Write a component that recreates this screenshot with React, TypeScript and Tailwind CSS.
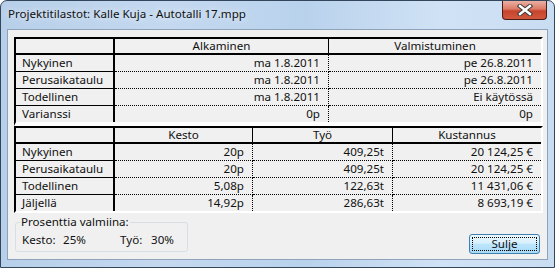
const font = { fontFamily: '"Noto Sans", "Open Sans", sans-serif' }

type Table = {
  cols: string
  head: string[]
  rows: string[][]
}

const ajat: Table = {
  cols: 'grid-cols-[99px_214px_212px]',
  head: ['', 'Alkaminen', 'Valmistuminen'],
  rows: [
    ['Nykyinen', 'ma 1.8.2011', 'pe 26.8.2011'],
    ['Perusaikataulu', 'ma 1.8.2011', 'pe 26.8.2011'],
    ['Todellinen', 'ma 1.8.2011', 'Ei käytössä'],
    ['Varianssi', '0p', '0p'],
  ],
}

const maarat: Table = {
  cols: 'grid-cols-[99px_138px_140px_148px]',
  head: ['', 'Kesto', 'Työ', 'Kustannus'],
  rows: [
    ['Nykyinen', '20p', '409,25t', '20 124,25 €'],
    ['Perusaikataulu', '20p', '409,25t', '20 124,25 €'],
    ['Todellinen', '5,08p', '122,63t', '11 431,06 €'],
    ['Jäljellä', '14,92p', '286,63t', '8 693,19 €'],
  ],
}

function StatsTable({ t, bottom }: { t: Table; bottom: string }) {
  return (
    <div className={`ml-[6px] w-[529px] border-l-2 border-t-2 border-r-2 border-l-black border-t-black border-r-white border-b-white ${bottom}`}>
      <div className={`grid ${t.cols} h-[16px] border-b-2 border-black leading-[14px]`}>
        {t.head.map((h, i) => (
          <div
            key={i}
            className={`text-center ${i === 0 ? 'border-r-2 border-black' : i < t.head.length - 1 ? 'border-r border-black' : ''}`}
          >
            {h}
          </div>
        ))}
      </div>
      {t.rows.map((r, ri) => {
        const last = ri === t.rows.length - 1
        return (
          <div key={ri} className={`grid ${t.cols} ${last ? 'h-[16px]' : 'h-[17px]'} leading-[16px]`}>
            {r.map((c, ci) => {
              if (ci === 0) {
                return (
                  <div key={ci} className={`pl-[6px] border-r-2 border-black ${last ? '' : 'border-b'}`}>
                    {c}
                  </div>
                )
              }
              return (
                <div
                  key={ci}
                  className={`pr-[8px] text-right border-dotted border-black ${last ? '' : 'border-b'} ${ci < r.length - 1 ? 'border-r' : ''}`}
                >
                  {c}
                </div>
              )
            })}
          </div>
        )
      })}
    </div>
  )
}

export default function App() {
  return (
    <div
      style={font}
      className="w-[555px] h-[268px] flex flex-col border border-[#34465c] rounded-t-[7px] overflow-hidden bg-[linear-gradient(90deg,#b7cfe9_0%,#c4d9f0_30%,#b9d2ec_55%,#d0e2f5_80%,#c9ddf2_100%)] text-[11.6px] text-[#111]"
    >
      <div className="h-[28px] flex justify-between items-start">
        <div className="pl-[7px] pt-[5px] leading-[16px] [text-shadow:0_0_7px_rgba(255,255,255,0.95)]">
          Projektitilastot: Kalle Kuja - Autotalli 17.mpp
        </div>
        <div className="mr-[7px] w-[45px] h-[19px] flex items-center justify-center border border-t-0 border-[#4a1c14] rounded-b-[4px] bg-[linear-gradient(180deg,#e9b0a4_0%,#dc7a66_45%,#c8442c_55%,#d0583e_100%)]">
          <svg width="16" height="12" viewBox="0 0 16 12">
            <path d="M3 2 L13 10 M13 2 L3 10" stroke="#3b3b3b" strokeWidth="4.4" strokeLinecap="square" />
            <path d="M3 2 L13 10 M13 2 L3 10" stroke="#ffffff" strokeWidth="2.4" strokeLinecap="square" />
          </svg>
        </div>
      </div>

      <div className="ml-[6px] w-[541px] h-[231px] border border-[#8ea3bb] bg-[#f0f0f0] flex flex-col">
        <div className="pt-[7px]">
          <StatsTable t={ajat} bottom="border-b-4" />
          <StatsTable t={maarat} bottom="border-b-2" />
        </div>

        <div className="flex justify-between items-start">
          <fieldset className="ml-[7px] mt-[2px] w-[173px] h-[37px] border border-[#d5dfe5] rounded-[3px] px-[6px]">
            <legend className="ml-[-2px] px-[1px] leading-[14px]">Prosenttia valmiina:</legend>
            <div className="flex leading-[16px] mt-[3px]">
              <span className="w-[41px]">Kesto:</span>
              <span className="w-[57px]">25%</span>
              <span className="w-[31px]">Työ:</span>
              <span>30%</span>
            </div>
          </fieldset>

          <button className="mt-[21px] mr-[7px] w-[71px] h-[20px] border border-[#3c7fb1] rounded-[3px] bg-[linear-gradient(180deg,#eaf6fd_0%,#d9f0fc_45%,#bee6fd_50%,#a7d9f5_100%)] p-[2px]">
            <div className="h-full border border-dotted border-black flex items-center justify-center leading-[14px]">
              Sulje
            </div>
          </button>
        </div>
      </div>
    </div>
  )
}
